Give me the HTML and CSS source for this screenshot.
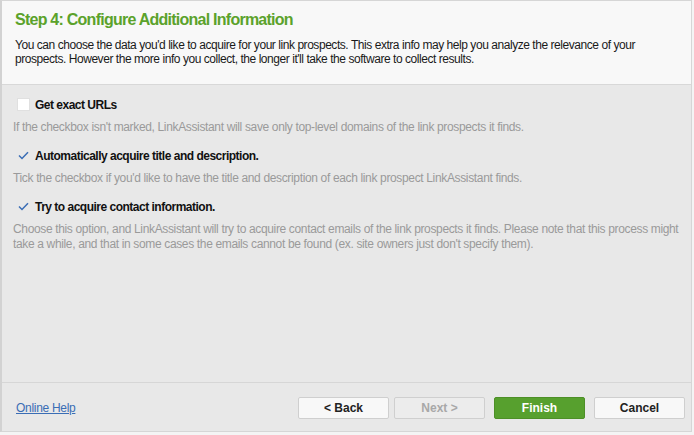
FILE: index.html
```html
<!DOCTYPE html>
<html lang="en">

<head>
    <meta charset="UTF-8">
    <meta name="viewport" content="width=device-width, initial-scale=1.0">
    <title>Step 4</title>
    <link rel="stylesheet" href="styles.css">
</head>

<body>
    <div class="wizard">
        <!-- Header -->
        <div class="header">
            <h1>Step 4: Configure Additional Information</h1>
            <p>You can choose the data you'd like to acquire for your link prospects. This extra info may help you analyze the relevance of your prospects. However the more info you collect, the longer it'll take the software to collect results.</p>
        </div>

        <!-- Options -->
        <div class="options">
            <div class="option">
                <label class="check-row">
                    <span class="box"></span>
                    Get exact URLs
                </label>
                <p class="hint">If the checkbox isn't marked, LinkAssistant will save only top-level domains of the link prospects it finds.</p>
            </div>
            <div class="option">
                <label class="check-row">
                    <span class="box checked">
                        <svg width="13" height="13" viewBox="0 0 13 13"><path d="M2 6.5 L5 9.5 L11 3.2" fill="none" stroke="#3a6db5" stroke-width="1.5"/></svg>
                    </span>
                    Automatically acquire title and description.
                </label>
                <p class="hint">Tick the checkbox if you'd like to have the title and description of each link prospect LinkAssistant finds.</p>
            </div>
            <div class="option">
                <label class="check-row">
                    <span class="box checked">
                        <svg width="13" height="13" viewBox="0 0 13 13"><path d="M2 6.5 L5 9.5 L11 3.2" fill="none" stroke="#3a6db5" stroke-width="1.5"/></svg>
                    </span>
                    Try to acquire contact information.
                </label>
                <p class="hint">Choose this option, and LinkAssistant will try to acquire contact emails of the link prospects it finds. Please note that this process might take a while, and that in some cases the emails cannot be found (ex. site owners just don't specify them).</p>
            </div>
        </div>

        <!-- Footer -->
        <div class="footer">
            <a href="#" class="help">Online Help</a>
            <div class="buttons">
                <button>&lt; Back</button>
                <button disabled>Next &gt;</button>
                <button class="primary">Finish</button>
                <button>Cancel</button>
            </div>
        </div>
    </div>
</body>

</html>
```

FILE: styles.css
```css
/* Reset */
* {
    margin: 0;
    padding: 0;
    box-sizing: border-box;
}

body {
    background-color: #f4f4f4;
    font-family: "Liberation Sans", Arial, sans-serif;
    font-size: 12px;
    letter-spacing: -0.45px;
}

/* Wizard frame */
.wizard {
    width: 692px;
    height: 432px;
    display: flex;
    flex-direction: column;
    background-color: #e8e8e8;
    border: 1px solid #d6d6d6;
    border-left: 2px solid #d2d2d2;
}

/* Header */
.header {
    height: 84px;
    padding: 9px 14px 0 13px;
    background-color: #f8f8f8;
    border-bottom: 1px solid #d8d8d8;
}

.header h1 {
    color: #5ba22b;
    font-size: 16px;
    font-weight: bold;
    line-height: 20px;
    letter-spacing: -0.75px;
    margin-bottom: 8px;
}

.header p {
    color: #1a1a1a;
    line-height: 14px;
}

/* Options */
.options {
    flex: 1;
    padding: 12px 10px 0 11px;
}

.option {
    margin-bottom: 13px;
}

.check-row {
    display: flex;
    align-items: center;
    gap: 5px;
    padding-left: 4px;
    font-weight: bold;
    color: #111;
    height: 15px;
    margin-bottom: 8px;
    letter-spacing: -0.5px;
}

.box {
    width: 13px;
    height: 13px;
    background-color: #fff;
    border: 1px solid #e0e0e0;
    display: flex;
}

.box.checked {
    background-color: transparent;
    border: none;
}

.hint {
    color: #9a9a9a;
    line-height: 15px;
    letter-spacing: -0.35px;
}

/* Footer */
.footer {
    height: 49px;
    display: flex;
    align-items: center;
    justify-content: space-between;
    padding: 1px 6px 0 14px;
    border-top: 1px solid #d6d6d6;
}

.help {
    color: #3a6db5;
    font-size: 12px;
    letter-spacing: -0.3px;
}

.buttons {
    display: flex;
    gap: 5px;
}

button {
    width: 91px;
    height: 22px;
    font-family: "Liberation Sans", Arial, sans-serif;
    font-size: 12px;
    font-weight: bold;
    color: #222;
    background-color: #f8f8f8;
    border: 1px solid #cfcfcf;
    border-radius: 2px;
}

button:disabled {
    color: #a8a8a8;
    background-color: #ececec;
}

button.primary {
    margin-left: 4px;
    margin-right: 4px;
    background-color: #57a02e;
    border-color: #4d8f27;
    color: #fff;
}
```
